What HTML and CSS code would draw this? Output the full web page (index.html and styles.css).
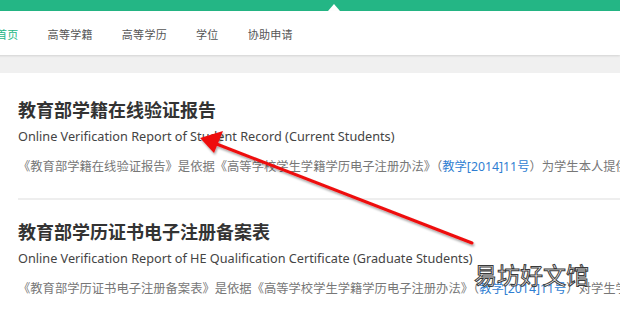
FILE: index.html
```html
<!DOCTYPE html>
<html lang="zh-CN">
<head>
    <meta charset="UTF-8">
    <title>学信网 在线验证报告</title>
    <link rel="stylesheet" href="styles.css">
</head>
<body>
    <div class="topbar">
        <span class="notch"></span>
    </div>

    <div class="nav">
        <a class="nav-item active">首页</a>
        <a class="nav-item">高等学籍</a>
        <a class="nav-item">高等学历</a>
        <a class="nav-item">学位</a>
        <a class="nav-item">协助申请</a>
    </div>

    <div class="gap"></div>

    <div class="card">
        <div class="report">
            <h2 class="report-title">教育部学籍在线验证报告</h2>
            <p class="report-en">Online Verification Report of Student Record (Current Students)</p>
            <p class="report-desc">《教育部学籍在线验证报告》是依据《高等学校学生学籍学历电子注册办法》（<a>教学[2014]11号</a>）为学生本人提供的学籍在线验证服务。</p>
        </div>
        <div class="report">
            <h2 class="report-title">教育部学历证书电子注册备案表</h2>
            <p class="report-en">Online Verification Report of HE Qualification Certificate (Graduate Students)</p>
            <p class="report-desc">《教育部学历证书电子注册备案表》是依据《高等学校学生学籍学历电子注册办法》（<a>教学[2014]11号</a>）对学生学历证书提供的在线验证服务。</p>
        </div>
    </div>

    <!-- annotation overlay -->
    <svg class="arrow" width="620" height="309" viewBox="0 0 620 309">
        <defs>
            <filter id="shadow" x="-10%" y="-10%" width="120%" height="130%">
                <feDropShadow dx="1" dy="2" stdDeviation="1.2" flood-color="#000" flood-opacity="0.35"/>
            </filter>
        </defs>
        <g filter="url(#shadow)">
            <line x1="472" y1="243" x2="214" y2="143" stroke="#ee1111" stroke-width="3" stroke-linecap="round"/>
            <polygon points="200,138 223,131 214,153" fill="#ee1111"/>
        </g>
    </svg>

    <div class="watermark">易坊好文馆</div>
</body>
</html>
```

FILE: styles.css
```css
body {
    margin: 0;
    width: 620px;
    height: 309px;
    overflow: hidden;
    position: relative;
    background: #fff;
    font-family: "Noto Sans", "Noto Sans CJK SC", sans-serif;
    color: #333;
}

.topbar {
    height: 11px;
    background: #24b685;
    position: relative;
}

.notch {
    position: absolute;
    left: 328px;
    bottom: 0;
    border-left: 6px solid transparent;
    border-right: 6px solid transparent;
    border-bottom: 7px solid #fff;
}

.nav {
    height: 44px;
    display: flex;
    align-items: center;
    gap: 29px;
    margin-left: -4px;
    padding-top: 1px;
    box-sizing: border-box;
    background: #fff;
    box-shadow: 0 1px 2px rgba(0,0,0,0.12);
    position: relative;
}

.nav-item {
    font-size: 11px;
    color: #555;
    letter-spacing: 0.3px;
}

.nav-item.active {
    color: #24b685;
}

.gap {
    height: 18px;
    background: #f0f0f0;
}

.card {
    background: #fff;
    padding-left: 18px;
}

.report {
    padding-top: 19px;
    padding-bottom: 21px;
    border-bottom: 2px solid #eeeeee;
}

.report:first-child {
    padding-top: 24px;
}

.report-title {
    margin: 0;
    font-size: 18px;
    font-weight: bold;
    line-height: 26px;
    color: #333;
    white-space: nowrap;
}

.report-en {
    margin: 3px 0 0;
    font-size: 12.7px;
    line-height: 20px;
    color: #444;
    white-space: nowrap;
}

.report-desc {
    margin: 11px 0 0;
    font-size: 12.3px;
    line-height: 20px;
    color: #777;
    white-space: nowrap;
}

.report-desc a {
    color: #2f7ed2;
}

.arrow {
    position: absolute;
    left: 0;
    top: 0;
}

.watermark {
    position: absolute;
    left: 474px;
    top: 261px;
    font-size: 23px;
    line-height: 28px;
    color: #fff;
    -webkit-text-stroke: 1px #3a3a3a;
}
```
